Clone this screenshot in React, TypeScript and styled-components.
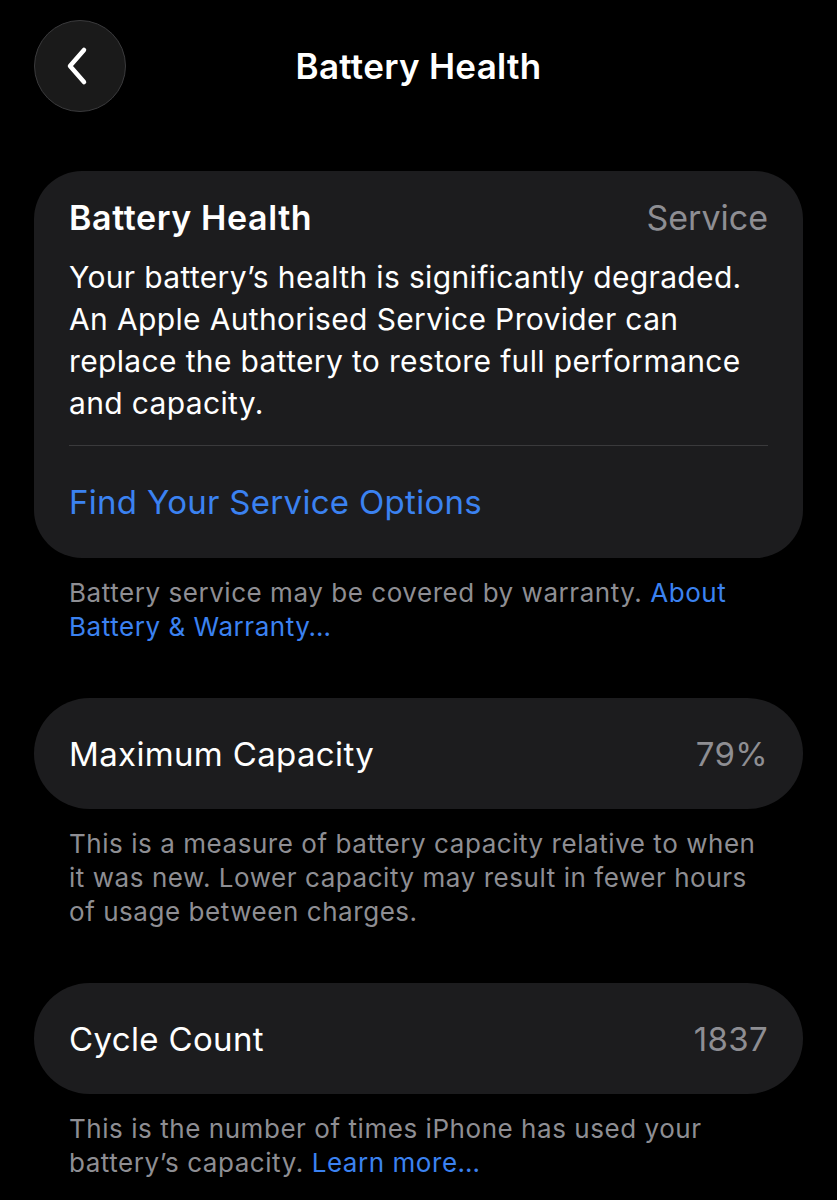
import React, { FunctionComponent, ReactNode } from 'react';
import styled, { createGlobalStyle } from 'styled-components';

const GlobalStyle = createGlobalStyle`
  html, body {
    margin: 0;
    padding: 0;
    background: #000;
  }

  body {
    font-family: Inter, Roboto, 'Liberation Sans', sans-serif;
    color: #fff;
    -webkit-font-smoothing: antialiased;
  }
`;

const Page = styled.div`
  width: 837px;
  min-height: 1200px;
  background: #000;
  overflow: hidden;
`;

const NavBar = styled.header`
  display: grid;
  grid-template-columns: 94px 1fr 94px;
  align-items: center;
  padding: 19px 34px 0;
  height: 93px;
`;

const BackButton = styled.button`
  width: 92px;
  height: 92px;
  border-radius: 50%;
  background: #1a1a1a;
  border: 1.5px solid #3a3a3c;
  display: flex;
  align-items: center;
  justify-content: center;
  padding: 0 6px 0 0;
  cursor: pointer;
`;

const NavTitle = styled.h1`
  margin: 0;
  text-align: center;
  font-size: 35px;
  font-weight: 600;
  letter-spacing: 0.3px;
  color: #fff;
`;

const Content = styled.main`
  display: flex;
  flex-direction: column;
  padding: 59px 34px 0;
`;

const Group = styled.section`
  display: flex;
  flex-direction: column;
  margin-bottom: 54px;
`;

interface CardProps {
  pill?: boolean;
}

const Card = styled.div<CardProps>`
  background: #1c1c1e;
  border-radius: ${({ pill }) => (pill ? '56px' : '48px')};
  padding: ${({ pill }) => (pill ? '0 35px' : '24px 35px 0')};
`;

const HeaderRow = styled.div`
  display: flex;
  justify-content: space-between;
  align-items: baseline;
`;

const CardTitle = styled.h2`
  margin: 0;
  font-size: 34px;
  font-weight: 600;
  letter-spacing: 0.6px;
  line-height: 46px;
`;

const Status = styled.span`
  font-size: 34px;
  line-height: 46px;
  color: #8e8e93;
`;

const Body = styled.p`
  margin: 15px 0 0;
  font-size: 30px;
  letter-spacing: 0.35px;
  line-height: 42px;
  padding-bottom: 21px;
  border-bottom: 1.5px solid #3a3a3c;
`;

const ActionLink = styled.a`
  display: block;
  font-size: 33px;
  letter-spacing: 0.3px;
  line-height: 112px;
  color: #3b82f1;
  text-decoration: none;
`;

const ValueRow = styled.div`
  display: flex;
  justify-content: space-between;
  align-items: center;
  height: 111px;
  font-size: 33px;
  letter-spacing: 0.35px;
`;

const Value = styled.span`
  color: #8e8e93;
`;

const Footnote = styled.p`
  margin: 0;
  padding: 18px 35px 0;
  font-size: 26px;
  letter-spacing: 0.55px;
  line-height: 34px;
  color: #8e8e93;
`;

const InlineLink = styled.a`
  color: #3b82f1;
  text-decoration: none;
`;

const Chevron = () => (
  <svg width="30" height="40" viewBox="0 0 30 40" fill="none">
    <path
      d="M22 4 L8 20 L22 36"
      stroke="#fff"
      strokeWidth="4.5"
      strokeLinecap="round"
      strokeLinejoin="round"
    />
  </svg>
);

interface StatRowProps {
  label: string;
  value: string;
  note: ReactNode;
}

const StatRow: FunctionComponent<StatRowProps> = ({ label, value, note }) => (
  <Group>
    <Card pill>
      <ValueRow>
        <span>{label}</span>
        <Value>{value}</Value>
      </ValueRow>
    </Card>
    <Footnote>{note}</Footnote>
  </Group>
);

const App: FunctionComponent = () => (
  <Page>
    <GlobalStyle />
    <NavBar>
      <BackButton aria-label="Back">
        <Chevron />
      </BackButton>
      <NavTitle>Battery Health</NavTitle>
      <span />
    </NavBar>
    <Content>
      <Group>
        <Card>
          <HeaderRow>
            <CardTitle>Battery Health</CardTitle>
            <Status>Service</Status>
          </HeaderRow>
          <Body>
            Your battery’s health is significantly degraded. An Apple Authorised
            Service Provider can replace the battery to restore full performance
            and capacity.
          </Body>
          <ActionLink href="#">Find Your Service Options</ActionLink>
        </Card>
        <Footnote>
          Battery service may be covered by warranty.{' '}
          <InlineLink href="#">About Battery &amp; Warranty…</InlineLink>
        </Footnote>
      </Group>
      <StatRow
        label="Maximum Capacity"
        value="79%"
        note="This is a measure of battery capacity relative to when it was new. Lower capacity may result in fewer hours of usage between charges."
      />
      <StatRow
        label="Cycle Count"
        value="1837"
        note={
          <>
            This is the number of times iPhone has used your battery’s capacity.{' '}
            <InlineLink href="#">Learn more…</InlineLink>
          </>
        }
      />
    </Content>
  </Page>
);

export default App;
